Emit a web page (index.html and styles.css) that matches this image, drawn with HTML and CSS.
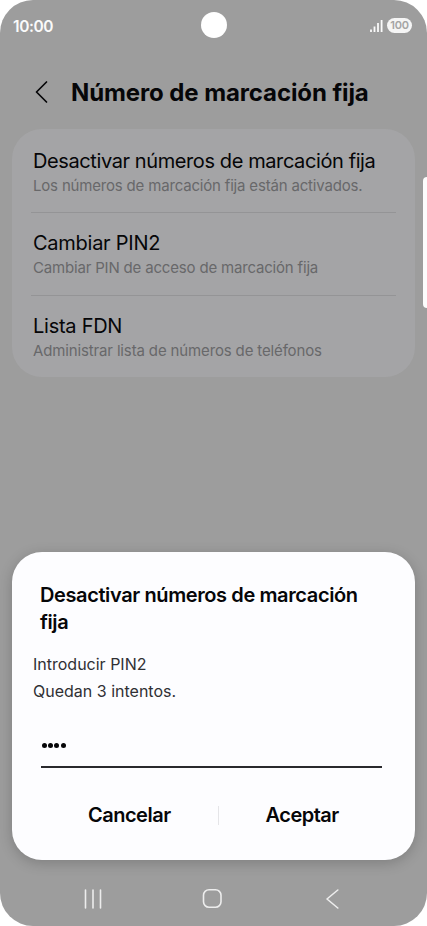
FILE: index.html
```html
<!DOCTYPE html>
<html lang="es">
<head>
<meta charset="utf-8">
<title>Número de marcación fija</title>
<link rel="stylesheet" href="styles.css">
</head>
<body>
<div class="phone">
  <header class="status">
    <span class="clock">10:00</span>
    <span class="camera"></span>
    <div class="indicators">
      <svg class="signal" width="13" height="14" viewBox="0 0 13 14"><path d="M1 10.5V13M4.5 7.5V13M8 4V13M11.6 1v12"/></svg>
      <span class="battery">100</span>
    </div>
  </header>
  <div class="titlebar">
    <svg class="back" width="14" height="24" viewBox="0 0 14 24"><path d="M12.5 2 2.5 12l10 10"/></svg>
    <h1 class="title">Número de marcación fija</h1>
  </div>
  <main class="settings">
    <section class="row"><span class="name name-disable">Desactivar números de marcación fija</span><span class="note note-disable">Los números de marcación fija están activados.</span></section>
    <section class="row"><span class="name name-change">Cambiar PIN2</span><span class="note note-change">Cambiar PIN de acceso de marcación fija</span></section>
    <section class="row"><span class="name name-list">Lista FDN</span><span class="note note-list">Administrar lista de números de teléfonos</span></section>
  </main>
  <section class="dialog">
    <h2 class="dialog-title">Desactivar números de marcación fija</h2>
    <p class="message"><span class="ask">Introducir PIN2</span><br><span class="tries">Quedan 3 intentos.</span></p>
    <div class="field"><i class="dot"></i><i class="dot"></i><i class="dot"></i><i class="dot"></i></div>
    <div class="actions"><span class="action cancel">Cancelar</span><span class="divider"></span><span class="action accept">Aceptar</span></div>
  </section>
  <nav class="navbar">
    <svg width="20" height="20" viewBox="0 0 20 20"><path d="M2.5 1v18M10 1v18M17.5 1v18"/></svg>
    <svg class="home" width="20" height="20" viewBox="0 0 20 20"><rect x="1.5" y=".8" width="17.5" height="17.5" rx="5.5"/></svg>
    <svg width="14" height="20" viewBox="0 0 14 20"><path d="M12.8 1 2 10l10.8 9"/></svg>
  </nav>
  <span class="edge-handle"></span>
</div>
</body>
</html>
```

FILE: styles.css
```css
* { box-sizing: border-box; }
body { margin: 0; background: #fff; font-family: Inter, "Noto Sans", sans-serif; color: #060608; }
h1, h2, p { margin: 0; }
svg { display: block; fill: none; stroke: currentColor; stroke-linecap: round; stroke-linejoin: round; }
.phone { position: relative; width: 427px; height: 926px; border-radius: 33px; overflow: hidden; background: #9d9d9d; white-space: nowrap; }
.status { display: grid; grid-template-columns: 1fr 26px 1fr; align-items: center; height: 50px; padding: 0 15px 0 13px; color: #fafafa; }
.clock { font-size: 15.5px; font-weight: 600; line-height: 20px; padding-top: 4px; letter-spacing: -.4px; }
.camera { width: 26px; height: 26px; border-radius: 50%; background: #fff; margin-left: 1px; }
.indicators { display: flex; justify-content: flex-end; align-items: center; gap: 4px; padding-top: 1px; }
.signal { stroke-width: 1.8; stroke-linecap: butt; }
.battery { width: 25px; height: 15px; border-radius: 8px; background: #f5f5f5; color: #a4a4a4; font-size: 11px; font-weight: 600; line-height: 15px; text-align: center; letter-spacing: -.2px; }
.titlebar { display: flex; align-items: center; height: 79px; padding: 5px 0 0 34px; }
.back { stroke-width: 1.7; }
.title { margin-left: 23px; padding-top: 1px; font-size: 24px; line-height: 32px; font-weight: 700; letter-spacing: -.1px; }
.settings { height: 248px; margin: 0 12px; border-radius: 30px; background: #a4a4a6; }
.row { height: 83px; margin: 0 19px; padding: 19px 0 0 2px; display: flex; flex-direction: column; align-items: flex-start; }
.row + .row { padding-top: 17px; border-top: 1px solid #949496; }
.name { font-size: 20px; line-height: 26px; }
.name-disable { letter-spacing: -.4px; }
.name-change, .name-list { letter-spacing: -.26px; }
.note { font-size: 15px; line-height: 20px; margin-top: 2px; color: #68686a; letter-spacing: -.18px; }
.note-list { letter-spacing: -.14px; }
.dialog { height: 307.5px; margin: 175px 12px 0; border-radius: 30px; background: #fdfdff; box-shadow: 0 3px 14px rgba(0,0,0,.2); padding-top: 30px; }
.dialog-title { width: 340px; margin-left: 28px; white-space: normal; font-size: 20px; line-height: 27px; font-weight: 600; letter-spacing: -.39px; }
.message { margin: 15px 0 0 21px; color: #303034; font-size: 16px; line-height: 27px; }
.field { display: flex; align-items: center; gap: 1.2px; width: 341px; height: 63px; margin-left: 29px; padding: 19px 0 0 1px; border-bottom: 2px solid #29292d; }
.dot { width: 5px; height: 5px; border-radius: 50%; background: #060608; }
.actions { display: grid; grid-template-columns: 175.5px 1px 1fr; align-items: center; height: 94px; padding: 0 28px 0 30px; }
.action { font-size: 20px; line-height: 26px; font-weight: 600; letter-spacing: -.5px; }
.cancel { margin-left: 46px; }
.accept { margin-left: 47px; }
.divider { height: 19px; background: #e5e5e8; }
.navbar { display: grid; grid-template-columns: 119px 123px 14px; align-items: center; height: 66.5px; padding: 11.5px 0 0 83px; color: #ededed; }
.navbar svg { stroke-width: 1.6; }
.edge-handle { position: absolute; right: -4px; top: 177px; width: 8px; height: 131px; border-radius: 4px; background: #fcfcfc; }
```
